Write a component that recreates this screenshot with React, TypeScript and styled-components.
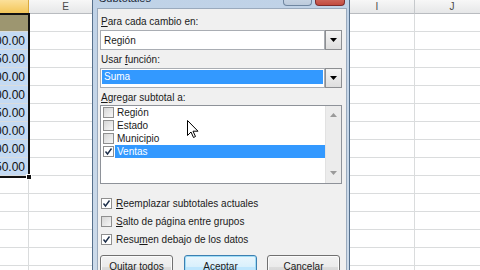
import React from 'react'
import styled, { createGlobalStyle } from 'styled-components'

const GlobalStyle = createGlobalStyle`
  html, body {
    margin: 0;
    padding: 0;
    background: #ffffff;
  }
  body {
    font-family: 'Liberation Sans', Arial, sans-serif;
  }
`

/* PAGE */
const Screen = styled.div`
  position: relative;
  width: 480px;
  height: 270px;
  overflow: hidden;
  background: #ffffff;
`

/* SHEET STYLES */
const Sheet = styled.div`
  display: grid;
  grid-template-columns: 29px 74px 79px 79px 79px 75px 75px;
  grid-template-rows: 14px repeat(15, 18px);
`

const ColHead = styled.div<{ $active?: boolean }>`
  box-sizing: border-box;
  display: flex;
  align-items: center;
  justify-content: center;
  font-size: 10px;
  color: #4a4a4a;
  border-right: 1px solid ${({ $active }) => ($active ? '#d9a93a' : '#c6c9cc')};
  border-bottom: 1px solid ${({ $active }) => ($active ? '#c99a2e' : '#b9bcc0')};
  background: ${({ $active }) =>
    $active ? 'linear-gradient(#fbe09a, #f3c658)' : 'linear-gradient(#f7f7f7, #e6e7e8)'};
`

type CellKind = 'plain' | 'head' | 'value'

const Cell = styled.div<{ $kind: CellKind }>`
  box-sizing: border-box;
  display: flex;
  align-items: center;
  justify-content: flex-end;
  overflow: hidden;
  white-space: nowrap;
  padding-right: 3px;
  font-size: 12px;
  color: #111;
  border-right: 1px solid #dadcdd;
  border-bottom: 1px solid #dadcdd;
  background: ${({ $kind }) =>
    $kind === 'head' ? '#9d9670' : $kind === 'value' ? '#c4daf3' : '#ffffff'};
`

const Selection = styled.div`
  position: absolute;
  left: -3px;
  top: 13px;
  width: 29px;
  height: 161px;
  border: 2px solid #111;
  pointer-events: none;
`

const FillHandle = styled.div`
  position: absolute;
  right: -4px;
  bottom: -4px;
  width: 4px;
  height: 4px;
  background: #111;
  border: 1px solid #fff;
`

/* DIALOG STYLES */
const Dialog = styled.div`
  position: absolute;
  left: 92px;
  top: -14px;
  width: 258px;
  height: 300px;
  box-sizing: border-box;
  border: 1px solid #56708c;
  background: linear-gradient(#bfd2e7, #cddbea);
  display: flex;
  flex-direction: column;
  font-size: 10px;
  color: #1a1a1a;
`

const TitleBar = styled.div`
  height: 21px;
  display: flex;
  align-items: flex-start;
  padding-left: 6px;
  padding-right: 4px;
`

const Title = styled.div`
  flex: 1;
  padding-top: 5px;
  font-size: 11px;
  color: #1b2838;
`

const CaptionButton = styled.div<{ $close?: boolean }>`
  box-sizing: border-box;
  width: ${({ $close }) => ($close ? 30 : 29)}px;
  height: 19px;
  margin-left: 3px;
  border: 1px solid ${({ $close }) => ($close ? '#7d2d2d' : '#6f86a0')};
  border-top: none;
  border-radius: 0 0 4px 4px;
  background: ${({ $close }) =>
    $close ? 'linear-gradient(#e6a39a, #c24b3f)' : 'linear-gradient(#dbe6f2, #bccbdc)'};
`

const Body = styled.div`
  flex: 1;
  margin: 0 2px 0 4px;
  padding: 6px 4px 0 2px;
  background: #f0f0f0;
  border: 1px solid #9aaabd;
  display: flex;
  flex-direction: column;
`

const Label = styled.div`
  height: 13px;
  line-height: 13px;
  margin-left: 1px;
  margin-top: ${({ $gap }: { $gap?: number }) => $gap ?? 0}px;
`

const Key = styled.span`
  text-decoration: underline;
`

const Combo = styled.div`
  display: flex;
  height: 20px;
  margin-top: 2px;
`

const Field = styled.div`
  flex: 1;
  display: flex;
  align-items: flex-start;
  box-sizing: border-box;
  background: #ffffff;
  border: 1px solid #a9adb3;
  padding: 1px;
`

const FieldText = styled.div<{ $selected?: boolean }>`
  flex: 1;
  height: 14px;
  line-height: 14px;
  padding-left: 2px;
  margin-top: ${({ $selected }) => ($selected ? 0 : 2)}px;
  background: ${({ $selected }) => ($selected ? '#3399ff' : 'transparent')};
  color: ${({ $selected }) => ($selected ? '#ffffff' : '#1a1a1a')};
`

const DropButton = styled.div`
  width: 17px;
  box-sizing: border-box;
  display: flex;
  align-items: center;
  justify-content: center;
  border: 1px solid #8d8f92;
  background: linear-gradient(#f4f4f4, #dedede);
`

const ListBox = styled.div`
  display: flex;
  height: 79px;
  margin-top: 1px;
  box-sizing: border-box;
  border: 1px solid #8e9299;
  background: #ffffff;
`

const Items = styled.div`
  flex: 1;
  display: flex;
  flex-direction: column;
`

const ListItem = styled.div`
  height: 13px;
  display: flex;
  align-items: center;
  padding-left: 2px;
`

const ItemText = styled.div<{ $selected?: boolean }>`
  flex: 1;
  height: 13px;
  line-height: 13px;
  margin-left: 1px;
  padding-left: 2px;
  background: ${({ $selected }) => ($selected ? '#3399ff' : 'transparent')};
  color: ${({ $selected }) => ($selected ? '#ffffff' : '#1a1a1a')};
`

const ScrollBar = styled.div`
  width: 16px;
  display: flex;
  flex-direction: column;
  align-items: center;
  justify-content: space-between;
  padding: 7px 0 8px;
  box-sizing: border-box;
  background: #ececec;
  border-left: 1px solid #e2e2e2;
`

const Box = styled.div<{ $checked?: boolean }>`
  width: 11px;
  height: 11px;
  box-sizing: border-box;
  flex-shrink: 0;
  display: flex;
  align-items: center;
  justify-content: center;
  border: 1px solid #8f8f8f;
  background: ${({ $checked }) =>
    $checked ? '#ffffff' : 'linear-gradient(135deg, #d6d6d6, #f7f7f7)'};
`

const Options = styled.div`
  margin-top: 10px;
  display: flex;
  flex-direction: column;
`

const Option = styled.div`
  height: 18px;
  display: flex;
  align-items: center;
  gap: 4px;
  padding-left: 1px;
`

const Buttons = styled.div`
  display: flex;
  margin-top: 7px;
`

const Button = styled.div<{ $focused?: boolean; $gap?: number }>`
  width: 73px;
  height: 23px;
  box-sizing: border-box;
  margin-left: ${({ $gap }) => $gap ?? 0}px;
  display: flex;
  justify-content: center;
  padding-top: 5px;
  border-radius: 3px;
  border: 1px solid ${({ $focused }) => ($focused ? '#3c7fb1' : '#707070')};
  box-shadow: inset 0 0 0 1px ${({ $focused }) => ($focused ? '#9fdcf6' : '#fbfbfb')};
  background: ${({ $focused }) =>
    $focused ? 'linear-gradient(#eaf6fd, #d9f0fc 50%, #bee6fd 51%)' : 'linear-gradient(#f2f2f2, #ebebeb 50%, #dddddd 51%, #cfcfcf)'};
`

const Cursor = styled.svg`
  position: absolute;
  left: 187px;
  top: 120px;
`

/* DRAWINGS */
const Arrow = ({ up, color = '#000' }: { up?: boolean; color?: string }) => (
  <svg width="7" height="4" viewBox="0 0 7 4">
    <path d={up ? 'M0 4 L3.5 0 L7 4 Z' : 'M0 0 L7 0 L3.5 4 Z'} fill={color} />
  </svg>
)

const Check = () => (
  <svg width="9" height="9" viewBox="0 0 9 9">
    <path d="M1.5 4.5 L3.5 7 L7.5 1.5" fill="none" stroke="#1d2f4a" strokeWidth="1.4" />
  </svg>
)

const CheckBox = ({ checked }: { checked?: boolean }) => (
  <Box $checked={checked}>{checked && <Check />}</Box>
)

/* DATA */
const columns = ['D', 'E', 'F', 'G', 'H', 'I', 'J']
const values = ['1900.00', '2650.00', '3900.00', '1800.00', '4350.00', '2900.00', '5600.00', '3450.00']
const listItems = [
  { name: 'Región', checked: false },
  { name: 'Estado', checked: false },
  { name: 'Municipio', checked: false },
  { name: 'Ventas', checked: true },
]

const App: React.FC = () => {
  const rows = Array.from({ length: 15 }, (_, r) => r)
  return (
    <Screen>
      <GlobalStyle />
      <Sheet>
        {columns.map((c) => (
          <ColHead key={c} $active={c === 'D'}>
            {c === 'D' ? '' : c}
          </ColHead>
        ))}
        {rows.map((r) =>
          columns.map((c) => {
            const isD = c === 'D'
            const kind: CellKind = isD && r === 0 ? 'head' : isD && r <= 8 ? 'value' : 'plain'
            return (
              <Cell key={`${c}${r}`} $kind={kind}>
                {kind === 'value' ? values[r - 1] : ''}
              </Cell>
            )
          })
        )}
      </Sheet>
      <Selection>
        <FillHandle />
      </Selection>

      <Dialog>
        <TitleBar>
          <Title>Subtotales</Title>
          <CaptionButton />
          <CaptionButton $close />
        </TitleBar>
        <Body>
          <Label>
            <Key>P</Key>ara cada cambio en:
          </Label>
          <Combo>
            <Field>
              <FieldText>Región</FieldText>
            </Field>
            <DropButton>
              <Arrow />
            </DropButton>
          </Combo>
          <Label $gap={3}>
            Usar <Key>f</Key>unción:
          </Label>
          <Combo>
            <Field>
              <FieldText $selected>Suma</FieldText>
            </Field>
            <DropButton>
              <Arrow />
            </DropButton>
          </Combo>
          <Label $gap={3}>
            <Key>A</Key>gregar subtotal a:
          </Label>
          <ListBox>
            <Items>
              {listItems.map((it) => (
                <ListItem key={it.name}>
                  <CheckBox checked={it.checked} />
                  <ItemText $selected={it.checked}>{it.name}</ItemText>
                </ListItem>
              ))}
            </Items>
            <ScrollBar>
              <Arrow up color="#9a9a9a" />
              <Arrow color="#9a9a9a" />
            </ScrollBar>
          </ListBox>
          <Options>
            <Option>
              <CheckBox checked />
              <span>
                <Key>R</Key>eemplazar subtotales actuales
              </span>
            </Option>
            <Option>
              <CheckBox />
              <span>
                <Key>S</Key>alto de página entre grupos
              </span>
            </Option>
            <Option>
              <CheckBox checked />
              <span>
                Resu<Key>m</Key>en debajo de los datos
              </span>
            </Option>
          </Options>
          <Buttons>
            <Button>Quitar todos</Button>
            <Button $focused $gap={11}>
              Aceptar
            </Button>
            <Button $gap={10}>Cancelar</Button>
          </Buttons>
        </Body>
      </Dialog>

      <Cursor width="12" height="19" viewBox="0 0 12 19">
        <path
          d="M0.5 0.5 L0.5 15.5 L4 12 L6.5 17.5 L8.5 16.5 L6 11.2 L11 11.2 Z"
          fill="#ffffff"
          stroke="#000000"
          strokeWidth="1"
        />
      </Cursor>
    </Screen>
  )
}

export default App
